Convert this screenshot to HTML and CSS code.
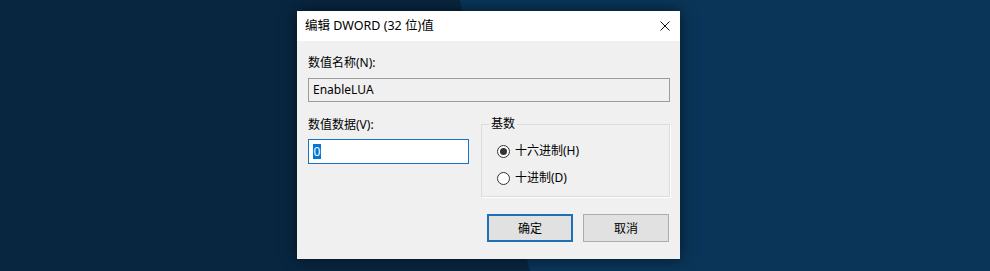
FILE: index.html
```html
<!DOCTYPE html>
<html lang="zh-CN">
<head>
    <meta charset="UTF-8">
    <title>编辑 DWORD (32 位)值</title>
    <link rel="stylesheet" href="styles.css">
</head>
<body>
    <div class="desktop">
        <div class="dialog">
            <div class="titlebar">
                <span class="title">编辑 DWORD (32 位)值</span>
                <svg class="close" width="10" height="10" viewBox="0 0 10 10">
                    <path d="M0.5 0.5 L9.5 9.5 M9.5 0.5 L0.5 9.5" stroke="#111" stroke-width="1" fill="none"/>
                </svg>
            </div>
            <div class="content">
                <span class="field-label">数值名称(N):</span>
                <div class="name-box">EnableLUA</div>
                <div class="row">
                    <div class="data-col">
                        <span class="field-label data-label">数值数据(V):</span>
                        <div class="data-box"><span class="sel">0</span></div>
                    </div>
                    <fieldset class="group">
                        <legend>基数</legend>
                        <div class="radio">
                            <span class="dot checked"></span>
                            <span>十六进制(H)</span>
                        </div>
                        <div class="radio">
                            <span class="dot"></span>
                            <span>十进制(D)</span>
                        </div>
                    </fieldset>
                </div>
                <div class="buttons">
                    <div class="btn btn-default">确定</div>
                    <div class="btn">取消</div>
                </div>
            </div>
        </div>
    </div>
</body>
</html>
```

FILE: styles.css
```css
body {
    margin: 0;
    height: 271px;
    overflow: hidden;
    background: linear-gradient(75.5deg, #082640 50%, #0a3558 50%);
    font-family: "Noto Sans", "Noto Sans CJK SC", sans-serif;
    font-size: 12px;
    color: #000;
}
.desktop {
    padding: 11px 0 0 297px;
}
.dialog {
    width: 383px;
    background-color: #f0f0f0;
    box-shadow: 0 0 14px rgba(0, 0, 0, 0.55);
}
.titlebar {
    height: 30px;
    background-color: #fff;
    display: flex;
    align-items: center;
    justify-content: space-between;
    padding: 0 10px 0 8px;
}
.title {
    font-size: 12.5px;
    line-height: 16px;
}
.close {
    display: block;
}
.content {
    padding: 14px 10px 17px 11px;
}
.field-label {
    display: block;
    line-height: 16px;
}
.name-box {
    margin-top: 7px;
    height: 24px;
    box-sizing: border-box;
    border: 1px solid #9c9c9c;
    background-color: #f0f0f0;
    padding-left: 4px;
    line-height: 22px;
}
.row {
    display: flex;
    gap: 12px;
}
.data-col {
    width: 161px;
}
.data-label {
    margin-top: 15px;
}
.data-box {
    margin-top: 6px;
    height: 25px;
    box-sizing: border-box;
    border: 1px solid #1a72c4;
    background-color: #fff;
    padding: 3px 0 0 4px;
}
.sel {
    display: inline-block;
    background-color: #0078d7;
    color: #fff;
    line-height: 15px;
    padding: 0 0.5px;
}
.group {
    flex: 1;
    margin: 14px 0 0 0;
    padding: 11px 10px 10px 15px;
    border: 1px solid #dcdcdc;
    box-shadow: 1px 1px 0 #fff;
    min-width: 0;
}
.group legend {
    margin-left: -8px;
    padding: 0 2px;
    line-height: 16px;
}
.radio {
    display: flex;
    align-items: center;
    gap: 5px;
    height: 16px;
    line-height: 16px;
}
.radio + .radio {
    margin-top: 11px;
}
.dot {
    width: 13px;
    height: 13px;
    box-sizing: border-box;
    border: 1px solid #333;
    border-radius: 50%;
    background-color: #fff;
    display: flex;
    align-items: center;
    justify-content: center;
}
.dot.checked::after {
    content: "";
    width: 7px;
    height: 7px;
    border-radius: 50%;
    background-color: #333;
}
.buttons {
    display: flex;
    justify-content: flex-end;
    gap: 10px;
    margin-top: 17px;
    margin-right: 1px;
}
.btn {
    width: 86px;
    height: 28px;
    box-sizing: border-box;
    border: 1px solid #adadad;
    background-color: #e1e1e1;
    display: flex;
    align-items: center;
    justify-content: center;
}
.btn-default {
    border: 2px solid #1f70b8;
}
```
